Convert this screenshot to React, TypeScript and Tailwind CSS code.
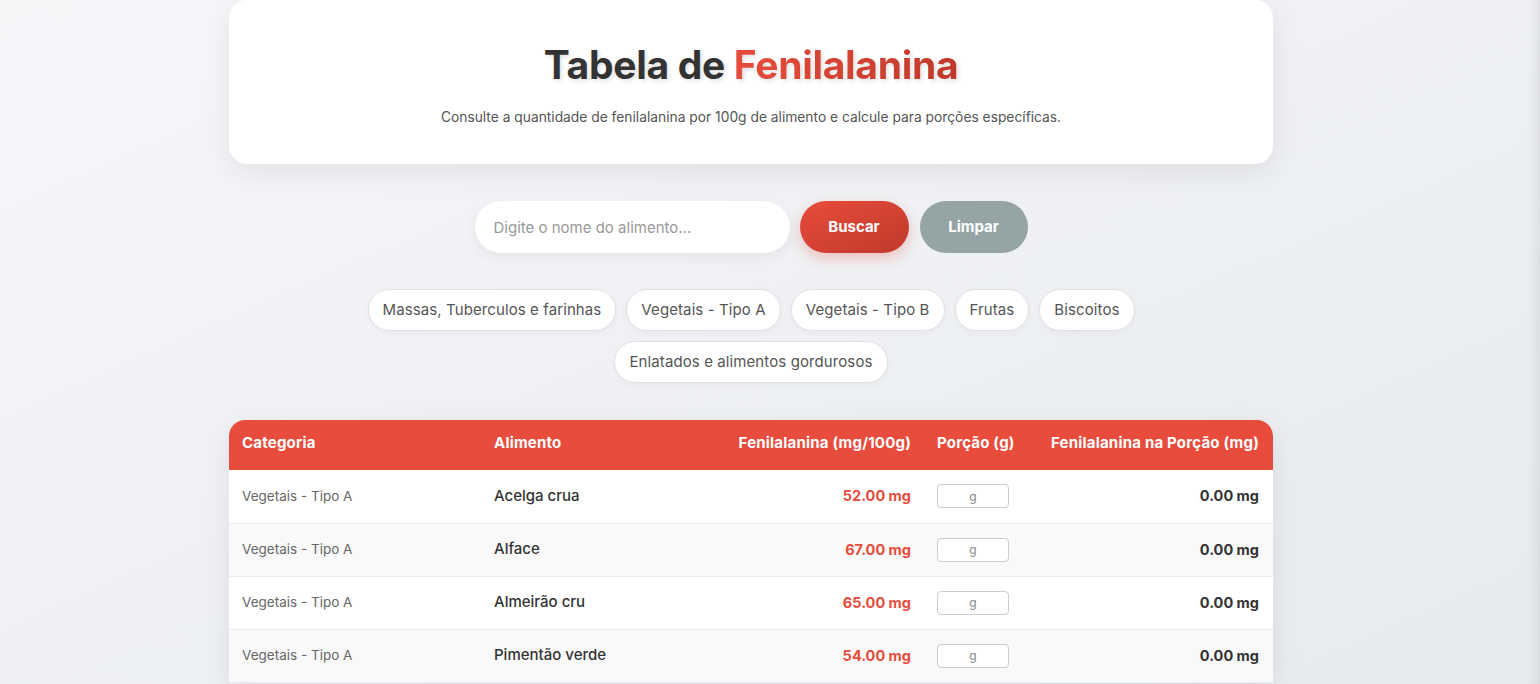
import React from 'react';

const font = { fontFamily: '"Inter", "Noto Sans", sans-serif' };

const categories = [
  'Massas, Tuberculos e farinhas',
  'Vegetais - Tipo A',
  'Vegetais - Tipo B',
  'Frutas',
  'Biscoitos',
  'Enlatados e alimentos gordurosos',
];

const foods = [
  { category: 'Vegetais - Tipo A', name: 'Acelga crua', phe: 52 },
  { category: 'Vegetais - Tipo A', name: 'Alface', phe: 67 },
  { category: 'Vegetais - Tipo A', name: 'Almeirão cru', phe: 65 },
  { category: 'Vegetais - Tipo A', name: 'Pimentão verde', phe: 54 },
];

const CategoryChip: React.FC<{ label: string }> = ({ label }) => (
  <button className="h-[42px] px-[14px] rounded-full bg-white border border-[#e2e2e2] text-[15px] tracking-[0.1px] text-[#555] shadow-[0_2px_6px_rgba(0,0,0,0.04)] whitespace-nowrap">
    {label}
  </button>
);

export default function App() {
  return (
    <div
      style={font}
      className="min-h-[684px] w-full bg-gradient-to-br from-[#f6f7f9] to-[#e7eaee] shadow-[inset_-14px_0_12px_-10px_rgba(0,0,0,0.08)] overflow-hidden"
    >
      <div className="w-[1502px] flex flex-col items-center">
        <div className="w-[1044px]">
          <header className="h-[164px] bg-white rounded-[18px] shadow-[0_8px_30px_rgba(0,0,0,0.08)] flex flex-col items-center pt-[40px]">
            <h1 className="text-[39px] leading-[50px] font-bold tracking-[-0.3px] text-[#333] [text-shadow:2px_2px_4px_rgba(0,0,0,0.12)]">
              Tabela de{' '}
              <span className="bg-gradient-to-r from-[#e74c3c] to-[#c0392b] bg-clip-text text-transparent [text-shadow:none] drop-shadow-[2px_2px_2px_rgba(0,0,0,0.12)]">
                Fenilalanina
              </span>
            </h1>
            <p className="mt-[17px] text-[13.8px] leading-[20px] text-[#555]">
              Consulte a quantidade de fenilalanina por 100g de alimento e calcule para porções específicas.
            </p>
          </header>

          <div className="mt-[37px] flex justify-center items-center">
            <input
              type="text"
              placeholder="Digite o nome do alimento..."
              className="w-[315px] h-[52px] rounded-full bg-white px-[19px] text-[15px] text-[#333] placeholder:text-[#999] outline-none shadow-[0_4px_14px_rgba(0,0,0,0.06)]"
            />
            <button className="ml-[10px] w-[109px] h-[52px] rounded-full bg-gradient-to-br from-[#e74c3c] to-[#c0392b] text-white text-[15px] font-bold shadow-[0_5px_14px_rgba(231,76,60,0.3)]">
              Buscar
            </button>
            <button className="ml-[11px] w-[108px] h-[52px] rounded-full bg-[#95a5a6] text-white text-[15px] font-bold">
              Limpar
            </button>
          </div>

          <div className="mt-[36px] mx-auto w-[780px] flex flex-wrap justify-center gap-[10px]">
            {categories.map((c) => (
              <CategoryChip key={c} label={c} />
            ))}
          </div>

          <div className="mt-[37px] rounded-t-[16px] overflow-hidden bg-white shadow-[0_8px_30px_rgba(0,0,0,0.08)]">
            <table className="w-full border-collapse table-fixed">
              <colgroup>
                <col className="w-[252px]" />
                <col className="w-[240px]" />
                <col className="w-[203px]" />
                <col className="w-[112px]" />
                <col />
              </colgroup>
              <thead>
                <tr className="h-[50px] bg-[#e74c3c] text-white text-[15px] tracking-[0.2px] font-bold">
                  <th className="px-[13px] pb-[3px] text-left font-bold">Categoria</th>
                  <th className="px-[13px] pb-[3px] text-left font-bold">Alimento</th>
                  <th className="px-[13px] pb-[3px] text-right font-bold whitespace-nowrap">Fenilalanina (mg/100g)</th>
                  <th className="px-[13px] pb-[3px] text-left font-bold whitespace-nowrap">Porção (g)</th>
                  <th className="px-[14px] pb-[3px] text-right font-bold whitespace-nowrap">Fenilalanina na Porção (mg)</th>
                </tr>
              </thead>
              <tbody>
                {foods.map((f, i) => (
                  <tr
                    key={f.name}
                    className={`h-[53px] border-b border-[#ececec] ${i % 2 === 1 ? 'bg-[#f9f9f9]' : 'bg-white'}`}
                  >
                    <td className="px-[13px] text-[13.5px] text-[#666]">{f.category}</td>
                    <td className="px-[13px] text-[15px] font-medium text-[#333]">{f.name}</td>
                    <td className="px-[13px] text-right text-[14.5px] font-bold text-[#e74c3c]">
                      {f.phe.toFixed(2)} mg
                    </td>
                    <td className="px-[13px]">
                      <input
                        type="text"
                        placeholder="g"
                        className="block w-[72px] h-[24px] rounded-[4px] border border-[#ccc] bg-white text-center text-[12px] placeholder:text-[#888] outline-none"
                      />
                    </td>
                    <td className="px-[14px] text-right text-[14.5px] font-bold text-[#333]">0.00 mg</td>
                  </tr>
                ))}
              </tbody>
            </table>
          </div>
        </div>
      </div>
    </div>
  );
}
